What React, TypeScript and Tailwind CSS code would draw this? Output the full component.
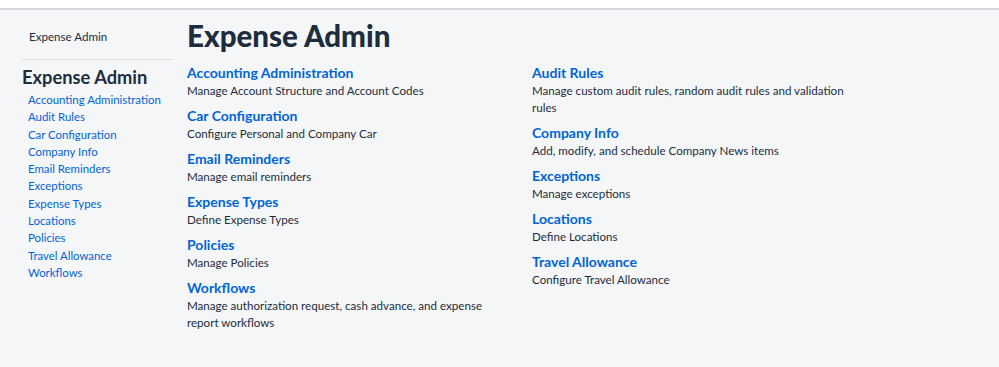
import React from "react";

interface AdminItem {
  title: string;
  desc: string;
}

const leftItems: AdminItem[] = [
  { title: "Accounting Administration", desc: "Manage Account Structure and Account Codes" },
  { title: "Car Configuration", desc: "Configure Personal and Company Car" },
  { title: "Email Reminders", desc: "Manage email reminders" },
  { title: "Expense Types", desc: "Define Expense Types" },
  { title: "Policies", desc: "Manage Policies" },
  { title: "Workflows", desc: "Manage authorization request, cash advance, and expense report workflows" },
];

const rightItems: AdminItem[] = [
  { title: "Audit Rules", desc: "Manage custom audit rules, random audit rules and validation rules" },
  { title: "Company Info", desc: "Add, modify, and schedule Company News items" },
  { title: "Exceptions", desc: "Manage exceptions" },
  { title: "Locations", desc: "Define Locations" },
  { title: "Travel Allowance", desc: "Configure Travel Allowance" },
];

const navLinks = [
  "Accounting Administration",
  "Audit Rules",
  "Car Configuration",
  "Company Info",
  "Email Reminders",
  "Exceptions",
  "Expense Types",
  "Locations",
  "Policies",
  "Travel Allowance",
  "Workflows",
];

const ItemColumn: React.FC<{ items: AdminItem[] }> = ({ items }) => (
  <div className="flex flex-col gap-[8px]">
    {items.map((item) => (
      <div key={item.title}>
        <a href="#" className="block text-[14px] leading-[18px] font-bold text-[#0064d9]">
          {item.title}
        </a>
        <p className="text-[11.6px] leading-[17px] text-[#1d2d3e]">{item.desc}</p>
      </div>
    ))}
  </div>
);

export default function App() {
  return (
    <div className="min-h-screen bg-[#f5f6f7] font-['Lato',sans-serif]">
      <div className="h-2 bg-white" />
      <div className="h-[2px] bg-[#d5d9dd]" />
      <div className="flex pl-[22px]">
        {/* sidebar */}
        <aside className="w-[151px] shrink-0">
          <div className="pt-[18px] pl-[7px] text-[11.6px] leading-[17px] text-[#1d2d3e]">Expense Admin</div>
          <div className="mt-[14px] h-px bg-[#dcdfe2]" />
          <h2 className="mt-[6px] text-[18.3px] leading-[22px] font-bold text-[#1d2d3e]">Expense Admin</h2>
          <ul className="mt-[3px] pl-[6px]">
            {navLinks.map((link) => (
              <li key={link} className="whitespace-nowrap text-[11.4px] leading-[17.3px] text-[#0064d9]">
                <a href="#">{link}</a>
              </li>
            ))}
          </ul>
        </aside>

        {/* main */}
        <main className="ml-[14px] pt-[9px]">
          <h1 className="text-[29.5px] leading-[34px] font-black text-[#1d2d3e]">Expense Admin</h1>
          <div className="mt-[11px] grid grid-cols-[315px_330px] gap-x-[30px]">
            <ItemColumn items={leftItems} />
            <ItemColumn items={rightItems} />
          </div>
        </main>
      </div>
    </div>
  );
}
